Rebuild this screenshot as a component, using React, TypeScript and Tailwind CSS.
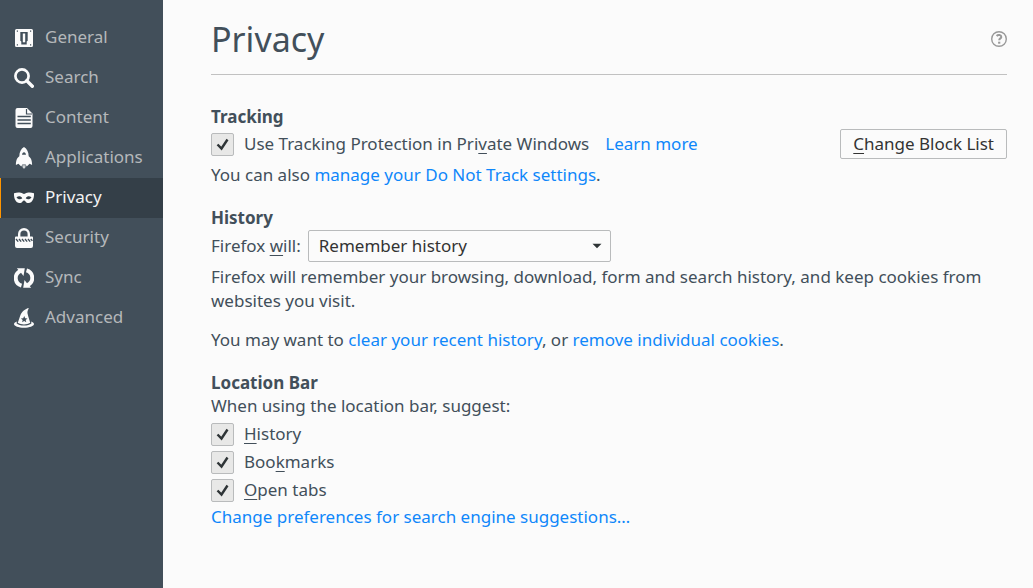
import { useState, type ReactNode } from "react";

function GeneralIcon() {
  return (
    <svg viewBox="0 0 20 20" className="size-5 shrink-0" fill="#fbfbfb" aria-hidden="true">
      <path fillRule="evenodd" d="M2.500 1h15a1.500 1.500 0 0 1 1.500 1.500v15a1.500 1.500 0 0 1-1.500 1.500h-15A1.500 1.500 0 0 1 1 17.500v-15A1.500 1.500 0 0 1 2.500 1ZM6.300 4v8.800l1 .7v3h5.400v-3l1-.7V4H6.300ZM2.800 2.500v1.200H4V2.500H2.800Zm13.200 0v1.200h1.200V2.500H16ZM2.800 16.300v1.200H4v-1.200H2.800Zm13.200 0v1.200h1.200v-1.200H16Z" />
      <path d="M7.300 4.800h5.400v7.500l-1 .8v2.400H8.300v-2.400l-1-.8V4.800Z" fill="#424f5a" />
      <path d="M8.800 5.500h2.400v8.800H8.800z" />
    </svg>
  );
}

function SearchIcon() {
  return (
    <svg viewBox="0 0 20 20" className="size-5 shrink-0" fill="none" stroke="#fbfbfb" aria-hidden="true">
      <circle cx="8" cy="8" r="6.600" strokeWidth="2.700" />
      <path d="m12.800 12.800 5.500 5.500" strokeWidth="3.400" strokeLinecap="round" />
    </svg>
  );
}

function ContentIcon() {
  return (
    <svg viewBox="0 0 20 20" className="size-5 shrink-0" aria-hidden="true">
      <path d="M3.500 0H13l5.500 5.500V18a2 2 0 0 1-2 2h-13a2 2 0 0 1-2-2V2a2 2 0 0 1 2-2Z" fill="#fbfbfb" />
      <path d="M12.500 1v5H18" fill="none" stroke="#424f5a" strokeWidth="1.200" />
      <path d="M3.500 8.500h13.300M3.500 12h13.300M3.500 15.500h13.300" stroke="#424f5a" strokeWidth="1.300" />
    </svg>
  );
}

function ApplicationsIcon() {
  return (
    <svg viewBox="0 0 20 20" className="size-5 shrink-0 overflow-visible" fill="#fbfbfb" aria-hidden="true">
      <path fillRule="evenodd" d="M10-1C13 .8 14.600 4 14.700 8.200c2.300 1.800 3.400 4 3.400 8.800l-2.500-1.300-2.900 2.700-1-2H8.300l-1 2-2.900-2.700L1.900 17c0-4.800 1.100-7 3.400-8.800C5.400 4 7 .8 10-1ZM8 6.800h4C11.800 5.200 11.100 4.300 10 4.300S8.200 5.200 8 6.800Z" />
      <path d="M8.200 17.300h3.600l-.5 2L10 21l-1.300-1.700-.5-2Z" fill="#d0d3d5" />
    </svg>
  );
}

function PrivacyIcon() {
  return (
    <svg viewBox="0 0 20 20" className="size-5 shrink-0" fill="#fbfbfb" aria-hidden="true">
      <path fillRule="evenodd" d="M0 5.200c3-1 7-.9 8.700.3.800.6 1.800.6 2.600 0C13 4.300 17 4.200 20 5.200c.2 3.400-.5 7-2.700 8.800-2 1.600-4.700 1.300-5.800-.5-.7-1.300-2.300-1.300-3 0C7.400 15.300 4.700 15.600 2.700 14 .5 12.200-.2 8.600 0 5.200ZM2.500 9.500C4 11.500 6.500 12 8.300 10.200 6.800 7.800 4.200 7.600 2.500 9.500Zm15 0c-1.700-1.900-4.300-1.700-5.800.7 1.800 1.800 4.300 1.300 5.800-.7Z" />
    </svg>
  );
}

function SecurityIcon() {
  return (
    <svg viewBox="0 0 20 20" className="size-5 shrink-0 overflow-visible" aria-hidden="true">
      <path d="M5.200 10V6a4.800 4.800 0 0 1 9.600 0v4" fill="none" stroke="#fbfbfb" strokeWidth="2.400" />
      <path d="M2 8.500h16a1 1 0 0 1 1 1V18a2 2 0 0 1-2 2H3a2 2 0 0 1-2-2V9.500a1 1 0 0 1 1-1Z" fill="#fbfbfb" />
      <path d="m2 11 2.200 2.600M5 11l2.200 2.600M8 11l2.200 2.600M11 11l2.200 2.600M14 11l2.200 2.600M16.800 11l1.600 1.900" stroke="#424f5a" strokeWidth="1.400" />
    </svg>
  );
}

function SyncIcon() {
  return (
    <svg viewBox="0 0 20 20" className="size-5 shrink-0" aria-hidden="true">
      <path d="M7.500 17.600C.3 15.500-.2 6.200 6.300 3M12.500 2.400C19.700 4.500 20.200 13.800 13.700 17" fill="none" stroke="#fbfbfb" strokeWidth="3.900" />
      <path d="M2.800.2H10.800L9.500 8 7.600 5.600 2.800.2ZM17.200 19.800H9.200l1.300-7.800 1.900 2.400 4.800 5.400Z" fill="#fbfbfb" />
    </svg>
  );
}

function AdvancedIcon() {
  return (
    <svg viewBox="0 0 20 20" className="size-5 shrink-0" aria-hidden="true">
      <path d="M14.800 0c-3.500.7-7 3.500-8.500 7.500L3.800 14.800C7.500 17 12.500 17 16.200 14.800l-1.900-6.300c-.6-2.500-1.200-3.700-.7-5.500L14.800 0Z" fill="#fbfbfb" />
      <path d="M3 13.500C1.500 14 0 14.800 0 16c0 2 4.500 3.800 10 3.800S20 18 20 16c0-1.200-1.500-2-3-2.500l.5 1.800c-1.500 1.600-4.200 2.300-7.500 2.300s-6-.7-7.500-2.300L3 13.500Z" fill="#fbfbfb" />
      <path d="m10.200 8 1 2.200 2.300.2-1.800 1.500.6 2.300-2.100-1.200-2.100 1.200.6-2.300-1.800-1.500 2.300-.2 1-2.200Z" fill="#424f5a" />
    </svg>
  );
}

const categories = [
  { name: "General", Icon: GeneralIcon },
  { name: "Search", Icon: SearchIcon },
  { name: "Content", Icon: ContentIcon },
  { name: "Applications", Icon: ApplicationsIcon },
  { name: "Privacy", Icon: PrivacyIcon },
  { name: "Security", Icon: SecurityIcon },
  { name: "Sync", Icon: SyncIcon },
  { name: "Advanced", Icon: AdvancedIcon },
];

function Key({ children }: { children: ReactNode }) {
  return <span className="underline decoration-1 underline-offset-3 [text-decoration-skip-ink:none]">{children}</span>;
}

function TextLink({ children }: { children: ReactNode }) {
  return (
    <a href="#" className="text-[#0f87fa] hover:underline">
      {children}
    </a>
  );
}

function CheckRow({ id, children }: { id: string; children: ReactNode }) {
  return (
    <div className="flex h-7 items-center gap-2.5">
      <span className="grid size-[23px] shrink-0">
        <input
          id={id}
          type="checkbox"
          defaultChecked
          className="peer col-start-1 row-start-1 size-[23px] appearance-none rounded-xs border border-[#b9bbbc] bg-[#e8e8e7]"
        />
        <svg viewBox="0 0 23 23" className="pointer-events-none invisible col-start-1 row-start-1 size-[23px] peer-checked:visible" fill="none" stroke="#2e3436" aria-hidden="true">
          <path d="m6.500 11.500 4 4 6-9" strokeWidth="2.400" />
        </svg>
      </span>
      <label htmlFor={id}>{children}</label>
    </div>
  );
}

export default function App() {
  const [active, setActive] = useState("Privacy");
  return (
    <div className="flex min-h-screen bg-[#fbfbfb] font-['Noto_Sans',sans-serif] text-[17px] leading-6 text-[#424f5a]">
      <nav className="w-[163px] shrink-0 bg-[#424f5a] pt-[18px]" aria-label="Categories">
        {categories.map(({ name, Icon }) => (
          <button
            key={name}
            type="button"
            onClick={() => setActive(name)}
            className={
              name === active
                ? "flex h-10 w-full items-center gap-[11px] border-l border-[#ff9500] bg-[#343f48] pl-[13px] text-left text-[#f2f2f2]"
                : "flex h-10 w-full items-center gap-[11px] border-l border-transparent pl-[13px] text-left text-[#b5b8ba]"
            }
          >
            <Icon />
            <span className="pb-0.5">{name}</span>
          </button>
        ))}
      </nav>

      <main className="min-w-0 flex-1 pr-[26px] pb-10 pl-12">
        <header className="flex h-[75px] items-center justify-between border-b border-[#c1c1c1] pt-1">
          <h1 className="text-[34px] leading-[48px]">Privacy</h1>
          <a href="#" aria-label="Help">
            <svg viewBox="0 0 16 16" className="size-4" fill="none" stroke="#999999" aria-hidden="true">
              <circle cx="8" cy="8" r="7.300" strokeWidth="1.400" />
              <path d="M5.600 5c1.500-1.600 4.700-1.100 4.700.9 0 1.500-2.100 1.500-2.100 3.400" strokeWidth="2" />
              <path d="M7.100 10.700h2.200v2H7.100z" fill="#999999" stroke="none" />
            </svg>
          </a>
        </header>

        <section className="pt-[30px]">
          <h2 className="font-bold">Tracking</h2>
          <div className="flex items-center justify-between">
            <div className="flex items-center gap-4">
              <CheckRow id="tracking">
                Use Tracking Protection in Pri<Key>v</Key>ate Windows
              </CheckRow>
              <TextLink>Learn more</TextLink>
            </div>
            <button type="button" className="h-[30px] rounded-xs border border-[#b9bbbc] px-3 text-[#333333]">
              <Key>C</Key>hange Block List
            </button>
          </div>
          <p className="pt-1">
            You can also <TextLink>manage your Do Not Track settings</TextLink>.
          </p>
        </section>

        <section className="pt-[19px]">
          <h2 className="font-bold">History</h2>
          <div className="flex items-center gap-[7px]">
            <label htmlFor="history-mode">
              Firefox <Key>w</Key>ill:
            </label>
            <span className="grid w-[303px] items-center">
              <select id="history-mode" className="col-start-1 row-start-1 h-8 w-full appearance-none rounded-xs border border-[#b9bbbc] bg-transparent pr-8 pl-2.5 text-[#333333]">
                <option>Remember history</option>
                <option>Never remember history</option>
                <option>Use custom settings for history</option>
              </select>
              <svg viewBox="0 0 10 6" className="pointer-events-none col-start-1 row-start-1 mr-[9px] h-1.5 w-2.5 justify-self-end" fill="#2e3436" aria-hidden="true">
                <path d="M.5.800h9L5 5.300z" />
              </svg>
            </span>
          </div>
          <p className="pt-[3px]">
            Firefox will remember your browsing, download, form and search history, and keep cookies from websites you visit.
          </p>
          <p className="pt-[15px]">
            You may want to <TextLink>clear your recent history</TextLink>, or <TextLink>remove individual cookies</TextLink>.
          </p>
        </section>

        <section className="pt-[19px]">
          <h2 className="font-bold">Location Bar</h2>
          <p className="-mt-px pb-0.5">When using the location bar, suggest:</p>
          <CheckRow id="suggest-history">
            <Key>H</Key>istory
          </CheckRow>
          <CheckRow id="suggest-bookmarks">
            Boo<Key>k</Key>marks
          </CheckRow>
          <CheckRow id="suggest-tabs">
            <Key>O</Key>pen tabs
          </CheckRow>
          <p className="pt-px">
            <TextLink>Change preferences for search engine suggestions…</TextLink>
          </p>
        </section>
      </main>
    </div>
  );
}
